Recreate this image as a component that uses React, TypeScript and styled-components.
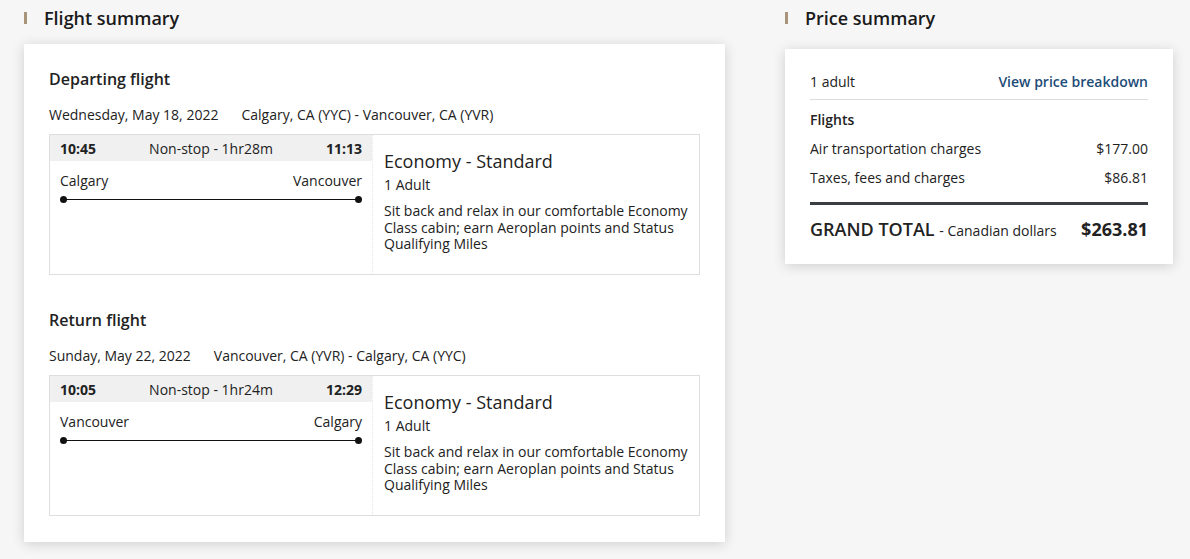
import React from "react";
import styled, { createGlobalStyle } from "styled-components";

const GlobalStyle = createGlobalStyle`
  html, body { margin: 0; padding: 0; }
  body {
    background: #f6f6f6;
    font-family: "Open Sans", "Noto Sans", sans-serif;
    color: #222;
    -webkit-font-smoothing: antialiased;
  }
`;

const Page = styled.div`
  display: flex;
  align-items: flex-start;
  gap: 60px;
  padding-left: 24px;
  width: 1190px;
  height: 559px;
  box-sizing: border-box;
`;

const Column = styled.div<{ $width: number }>`
  width: ${(p) => p.$width}px;
  display: flex;
  flex-direction: column;
`;

const Heading = styled.h2<{ $after: number }>`
  display: flex;
  align-items: center;
  gap: 17px;
  margin: 6px 0 ${(p) => p.$after}px;
  font-size: 18px;
  line-height: 24px;
  font-weight: 600;
  color: #1a1a1a;
  &::before {
    content: "";
    width: 3px;
    height: 12px;
    background: #a89579;
    flex: none;
  }
`;

const Card = styled.div<{ $pad: string }>`
  background: #fff;
  box-shadow: 0 2px 12px rgba(0, 0, 0, 0.16);
  padding: ${(p) => p.$pad};
`;

const SectionTitle = styled.h3<{ $top: number }>`
  margin: ${(p) => p.$top}px 0 0;
  font-size: 16px;
  line-height: 22px;
  font-weight: 600;
`;

const DateRow = styled.div`
  display: flex;
  gap: 23px;
  margin-top: 15px;
  font-size: 14px;
  line-height: 20px;
`;

const FlightBox = styled.div`
  margin-top: 9px;
  height: 141px;
  box-sizing: border-box;
  border: 1px solid #dedede;
  display: grid;
  grid-template-columns: 323px 1fr;
`;

const Itinerary = styled.div`
  border-right: 1px dotted #e6e6e6;
`;

const TimeBar = styled.div`
  display: grid;
  grid-template-columns: 1fr auto 1fr;
  align-items: center;
  height: 26px;
  padding: 0 10px;
  background: #f0f0f0;
  font-size: 14px;
`;

const Time = styled.span<{ $align: "left" | "right" }>`
  font-weight: 700;
  text-align: ${(p) => p.$align};
`;

const Cities = styled.div`
  display: flex;
  justify-content: space-between;
  margin-top: 10px;
  padding: 0 10px;
  font-size: 14px;
  line-height: 20px;
`;

const Route = styled.div`
  position: relative;
  margin: 8px 13px 0;
  height: 1px;
  background: #111;
  &::before,
  &::after {
    content: "";
    position: absolute;
    top: -3px;
    width: 7px;
    height: 7px;
    border-radius: 50%;
    background: #111;
  }
  &::before { left: -3px; }
  &::after { right: -3px; }
`;

const Fare = styled.div`
  padding: 14px 11px 0;
`;

const FareName = styled.div`
  font-size: 18px;
  line-height: 24px;
`;

const FarePax = styled.div`
  font-size: 14px;
  line-height: 20px;
  margin-top: 2px;
`;

const FareDesc = styled.p`
  margin: 8px 0 0;
  font-size: 14px;
  line-height: 16.6px;
`;

const Row = styled.div<{ $top: number }>`
  display: flex;
  justify-content: space-between;
  align-items: baseline;
  margin-top: ${(p) => p.$top}px;
  font-size: 14px;
  line-height: 20px;
`;

const TopRow = styled(Row)`
  padding-bottom: 7px;
  border-bottom: 1px solid #dcdcdc;
`;

const Link = styled.a`
  color: #1d4c78;
  font-weight: 600;
  text-decoration: none;
`;

const Label = styled.div`
  margin-top: 10px;
  font-size: 14px;
  line-height: 20px;
  font-weight: 600;
`;

const Rule = styled.div`
  margin-top: 14px;
  height: 3px;
  background: #3a3d42;
`;

const Total = styled.div`
  display: flex;
  justify-content: space-between;
  align-items: baseline;
  margin-top: 12px;
  height: 24px;
  line-height: 24px;
`;

const TotalLabel = styled.span`
  font-size: 18px;
  font-weight: 600;
  line-height: 24px;
  small {
    font-size: 14px;
    font-weight: 400;
    line-height: 1;
  }
`;

const TotalValue = styled.span`
  font-size: 18px;
  font-weight: 700;
  line-height: 24px;
`;

type Flight = {
  title: string;
  date: string;
  route: string;
  dep: string;
  arr: string;
  duration: string;
  from: string;
  to: string;
};

const flights: Flight[] = [
  {
    title: "Departing flight",
    date: "Wednesday, May 18, 2022",
    route: "Calgary, CA (YYC) - Vancouver, CA (YVR)",
    dep: "10:45",
    arr: "11:13",
    duration: "Non-stop - 1hr28m",
    from: "Calgary",
    to: "Vancouver",
  },
  {
    title: "Return flight",
    date: "Sunday, May 22, 2022",
    route: "Vancouver, CA (YVR) - Calgary, CA (YYC)",
    dep: "10:05",
    arr: "12:29",
    duration: "Non-stop - 1hr24m",
    from: "Vancouver",
    to: "Calgary",
  },
];

function FlightSection({ f, top }: { f: Flight; top: number }) {
  return (
    <section>
      <SectionTitle $top={top}>{f.title}</SectionTitle>
      <DateRow>
        <span>{f.date}</span>
        <span>{f.route}</span>
      </DateRow>
      <FlightBox>
        <Itinerary>
          <TimeBar>
            <Time $align="left">{f.dep}</Time>
            <span>{f.duration}</span>
            <Time $align="right">{f.arr}</Time>
          </TimeBar>
          <Cities>
            <span>{f.from}</span>
            <span>{f.to}</span>
          </Cities>
          <Route />
        </Itinerary>
        <Fare>
          <FareName>Economy - Standard</FareName>
          <FarePax>1 Adult</FarePax>
          <FareDesc>
            Sit back and relax in our comfortable Economy Class cabin; earn
            Aeroplan points and Status Qualifying Miles
          </FareDesc>
        </Fare>
      </FlightBox>
    </section>
  );
}

export default function App() {
  return (
    <>
      <GlobalStyle />
      <Page>
        <Column $width={701}>
          <Heading $after={14}>Flight summary</Heading>
          <Card $pad="24px 25px 26px">
            <FlightSection f={flights[0]} top={0} />
            <FlightSection f={flights[1]} top={34} />
          </Card>
        </Column>
        <Column $width={388}>
          <Heading $after={19}>Price summary</Heading>
          <Card $pad="23px 25px 23px">
            <TopRow $top={0}>
              <span>1 adult</span>
              <Link href="#">View price breakdown</Link>
            </TopRow>
            <Label>Flights</Label>
            <Row $top={9}>
              <span>Air transportation charges</span>
              <span>$177.00</span>
            </Row>
            <Row $top={9}>
              <span>Taxes, fees and charges</span>
              <span>$86.81</span>
            </Row>
            <Rule />
            <Total>
              <TotalLabel>
                GRAND TOTAL <small>- Canadian dollars</small>
              </TotalLabel>
              <TotalValue>$263.81</TotalValue>
            </Total>
          </Card>
        </Column>
      </Page>
    </>
  );
}
